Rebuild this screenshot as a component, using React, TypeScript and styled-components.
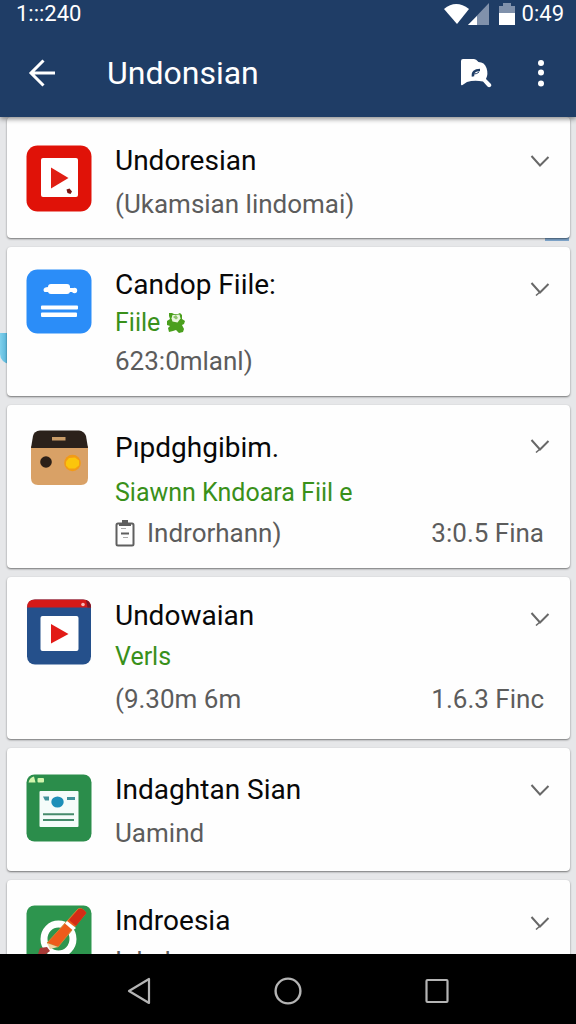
import React from 'react';
import styled, { createGlobalStyle } from 'styled-components';

const GlobalStyle = createGlobalStyle`
  *, *::before, *::after { box-sizing: border-box; }
  body { margin: 0; font-family: Roboto, "Liberation Sans", sans-serif; background: #e6e7e9; }
  h1, h2, p, ul { margin: 0; padding: 0; font-weight: 400; }
  button { border: 0; padding: 0; background: none; color: inherit; font: inherit; cursor: pointer; }
  svg { display: block; }
`;

const Screen = styled.div`
  display: flex;
  flex-direction: column;
  height: 100vh;
`;

const Header = styled.header`
  position: relative;
  z-index: 1;
  flex: none;
  color: #fff;
  background: #1f3d66;
  box-shadow: 0 2px 5px rgba(0, 0, 0, 0.45);
`;

const StatusBar = styled.div`
  display: flex;
  align-items: center;
  justify-content: space-between;
  height: 28px;
  padding: 0 12px 0 16px;
  font-size: 22px;
  line-height: 28px;
`;

const StatusIcons = styled.div`
  display: flex;
  align-items: center;
`;

const Clock = styled.span`
  margin-left: 6px;
`;

const Toolbar = styled.div`
  display: flex;
  align-items: center;
  height: 89px;
  padding: 0 13px 0 20px;
`;

const ToolButton = styled.button`
  display: flex;
  align-items: center;
  justify-content: center;
  flex: none;
  width: 44px;
  height: 44px;
`;

const Title = styled.h1`
  flex: 1;
  padding-left: 43px;
  font-size: 32px;
  line-height: 40px;
`;

const Actions = styled.div`
  display: flex;
  gap: 21px;
`;

const List = styled.ul`
  position: relative;
  flex: 1;
  min-height: 0;
  display: flex;
  flex-direction: column;
  gap: 9px;
  padding: 0 6px 0 7px;
  overflow: hidden;
  list-style: none;
  background: #e6e7e9;
`;

const Peek = styled.li<{ $edge: 'left' | 'right' }>`
  position: absolute;
  ${({ $edge }) =>
    $edge === 'left'
      ? 'left: 0; top: 216px; width: 12px; height: 31px; background: linear-gradient(90deg, #7fd0ec, #3fa3cc); border-radius: 0 0 0 10px;'
      : 'right: 7px; top: 118px; width: 24px; height: 6px; background: #7fa6cc;'}
`;

const Card = styled.li<{ $top: number; $bottom: number }>`
  position: relative;
  display: flex;
  flex: none;
  padding: ${({ $top, $bottom }) => `${$top}px 8px ${$bottom}px 19px`};
  background: #fefefe;
  border-radius: 4px;
  box-shadow: 0 1px 2px rgba(0, 0, 0, 0.5);
`;

const AppIcon = styled.div<{ $top: number }>`
  flex: none;
  width: 66px;
  height: 68px;
  margin: ${({ $top }) => $top}px 23px -10px 0;
`;

const Body = styled.div`
  flex: 1;
  min-width: 0;
  white-space: nowrap;
`;

const Name = styled.h2<{ $lead: number }>`
  color: #080808;
  font-size: 28px;
  line-height: ${({ $lead }) => $lead}px;
`;

const Line = styled.p<{ $line: number; $green?: boolean }>`
  display: flex;
  align-items: center;
  gap: ${({ $green }) => ($green ? 6 : 12)}px;
  color: ${({ $green }) => ($green ? '#39901a' : '#5c5c5c')};
  font-size: ${({ $green }) => ($green ? 25 : 26)}px;
  line-height: ${({ $line }) => $line}px;
`;

const Side = styled.div`
  display: flex;
  flex-direction: column;
  align-items: flex-end;
  justify-content: space-between;
`;

const Meta = styled.p<{ $line: number }>`
  padding-right: 18px;
  color: #5c5c5c;
  font-size: 26px;
  line-height: ${({ $line }) => $line}px;
`;

const NavBar = styled.nav`
  display: flex;
  flex: none;
  height: 70px;
  padding: 4px 65px 0;
  background: #000;
`;

const NavButton = styled.button`
  display: flex;
  flex: 1;
  align-items: center;
  justify-content: center;
`;

const Chevron = ({ tick }: { tick?: boolean }) => (
  <svg width="20" height="16" viewBox="0 0 20 16" fill="none" stroke="#686868" strokeWidth="2">
    <path d="M1.500 3 10 12.500 18.500 4" />
    {tick && <path d="m10 12-4 3.500" strokeWidth="1.500" />}
  </svg>
);

const RedPlayer = () => (
  <svg width="66" height="68" viewBox="0 0 66 68">
    <rect x="0.500" y="0.500" width="65" height="66" rx="11" fill="#e01208" />
    <rect x="15" y="13" width="37" height="39" rx="2" fill="#fff" />
    <path d="M25 22.500v21L42.500 33z" fill="#e01f14" />
    <path d="m40.500 44.500 3-1 2.500 3-1.500 2.500-3-1z" fill="#7a1410" />
  </svg>
);

const BlueDocument = () => (
  <svg width="66" height="68" viewBox="0 0 66 68">
    <rect x="0.500" y="0.500" width="65" height="64" rx="11" fill="#2b8df8" />
    <rect x="22" y="15" width="22" height="10" rx="3" fill="#fff" />
    <path d="M17.500 21q0-3 5-3v5h-4q-1-1-1-2z" fill="#fff" />
    <circle cx="48.500" cy="21.500" r="2.700" fill="#fff" />
    <path d="M43 19h4v4h-4z" fill="#fff" />
    <rect x="15" y="36.500" width="37" height="4" rx="1" fill="#fff" />
    <rect x="15" y="43.500" width="36" height="4.500" rx="1" fill="#fff" />
  </svg>
);

const TanBox = () => (
  <svg width="66" height="68" viewBox="0 0 66 68">
    <path d="M5 16h57v32q0 7-7 7H12q-7 0-7-7z" fill="#d9a166" />
    <path d="M5 18 7 6q1-5 7-5.500h39q5 0.500 7 5.500l2 12z" fill="#2b211b" />
    <rect x="26" y="7" width="13.500" height="3.500" fill="#c99c68" />
    <circle cx="20" cy="32" r="5.800" fill="#2c2018" />
    <circle cx="46.500" cy="33" r="8.300" fill="#f29b17" />
    <path d="m43 28 6-.5 4 3v5l-4 3h-6l-3-3v-4z" fill="#fbc50c" />
  </svg>
);

const BluePlayer = () => (
  <svg width="66" height="68" viewBox="0 0 66 68">
    <rect x="1" y="0.500" width="64" height="65" rx="8" fill="#25508b" />
    <path d="M1 8.500q0-8 8-8h48q8 0 8 8z" fill="#d51a18" />
    <path d="M60 1q5 2 5 7.500h-3.500z" fill="#7b1726" />
    <circle cx="57" cy="5.500" r="1.800" fill="#f6b7b4" />
    <rect x="14.500" y="17" width="38" height="35" rx="2" fill="#fff" />
    <path d="M25 25v19.500L42.500 35z" fill="#e21b17" />
  </svg>
);

const GreenForm = () => (
  <svg width="66" height="68" viewBox="0 0 66 68">
    <rect x="0.500" y="0.500" width="65" height="67" rx="8" fill="#2b8d4b" />
    <path d="M2.500 8.500q1-5 5.500-6l1.500 6z" fill="#d3f5ae" />
    <rect x="11.500" y="4" width="6.500" height="4.500" rx="1" fill="#d3f5ae" />
    <rect x="13.500" y="17" width="39" height="36" rx="1" fill="#f5fcfa" />
    <path d="M17 22.500h6v4h-4zM41 23h8v3h-8z" fill="#42929a" />
    <ellipse cx="31.500" cy="28" rx="6.200" ry="5.600" fill="#1d8fb8" />
    <path d="M17 40.300h31M17 46h31" stroke="#468b6c" strokeWidth="2" />
  </svg>
);

const GreenMarker = () => (
  <svg width="66" height="68" viewBox="0 0 66 68">
    <rect x="0.500" y="0.500" width="65" height="67" rx="8" fill="#2d954e" />
    <ellipse cx="32.500" cy="34" rx="14.500" ry="15" fill="none" stroke="#fff" strokeWidth="7" />
    <path d="m14 43 7-1 3 4-8 6-4-3z" fill="#a63a36" />
    <path d="m21 38 31-34q4-2 8 4L32 42z" fill="#ee5b1b" stroke="#c98a32" strokeWidth="1" />
    <path d="m43 15 9.500-11q4-2 8 4L50 21z" fill="#d32c16" />
    <path d="m41 16 9 7-3 2.500-8-7z" fill="#fff" />
    <path d="m21 38 11 4-8 2z" fill="#f3d3a2" />
  </svg>
);

const Bug = () => (
  <svg width="20" height="22" viewBox="0 0 20 22">
    <path
      d="M3 1h3l2 1h4l2-1 2 2v4l3 2-1 3-2 1 2 4-1 3-4 1-3-3-3 1-4 1-1-4 2-2-3-1V9l3-2-1-3z"
      fill="#4a9f1d"
    />
    <path d="m6.500 3 7-.5 1 4-3 4-5-1-1-3z" fill="#eaf5df" />
    <path d="m7 5 3-2 2 3-2 1.500z" fill="#8fc36c" />
  </svg>
);

const Clipboard = () => (
  <svg width="20" height="28" viewBox="0 0 20 28" fill="none" stroke="#5f5f5f">
    <rect x="1.500" y="4.500" width="17" height="22" rx="1.500" strokeWidth="2" />
    <path d="M4 5.500h12M7 2.500h6" strokeWidth="3" />
    <path d="M6 14.500h8" strokeWidth="2" />
    <path d="M8 18.500h5M6 9.500h5" strokeWidth="1" stroke="#aaa" />
  </svg>
);

interface Entry {
  name: string;
  icon: React.ReactNode;
  iconTop: number;
  top: number;
  bottom: number;
  lead: number;
  line: number;
  green?: string;
  badge?: React.ReactNode;
  detail: string;
  detailIcon?: React.ReactNode;
  meta?: string;
  tick?: boolean;
}

const entries: Entry[] = [
  { name: 'Undoresian', icon: <RedPlayer />, iconTop: 6, top: 22, bottom: 13, lead: 44, line: 42, detail: '(Ukamsian lindomai)' },
  { name: 'Candop Fiile:', icon: <BlueDocument />, iconTop: 3, top: 19, bottom: 16, lead: 38, line: 38, green: 'Fiile', badge: <Bug />, detail: '623:0mlanl)', tick: true },
  { name: 'Pıpdghgibim.', icon: <TanBox />, iconTop: 7, top: 18, bottom: 15, lead: 50, line: 40, green: 'Siawnn Kndoara Fiil e', detail: 'Indrorhann)', detailIcon: <Clipboard />, meta: '3:0.5 Fina', tick: true },
  { name: 'Undowaian', icon: <BluePlayer />, iconTop: 3, top: 19, bottom: 19, lead: 40, line: 42, green: 'Verls', detail: '(9.30m 6m', meta: '1.6.3 Finc', tick: true },
  { name: 'Indaghtan Sian', icon: <GreenForm />, iconTop: 6, top: 20, bottom: 17, lead: 44, line: 42, detail: 'Uamind' },
  { name: 'Indroesia', icon: <GreenMarker />, iconTop: 5, top: 20, bottom: 17, lead: 42, line: 38, detail: 'Inkol', tick: true },
];

export default function App() {
  return (
    <Screen>
      <GlobalStyle />
      <Header>
        <StatusBar>
          <span>1:::240</span>
          <StatusIcons>
            <svg width="72" height="24" viewBox="0 0 72 24">
              <path d="M0 7Q12-3 25 7L13 22z" fill="#fff" />
              <path d="M45 1v22H24z" fill="#8091ab" />
              <path d="M33 14v9h-9z" fill="#fff" />
              <path d="M55 4h4V1h8v3h4v8H55z" fill="#8091ab" />
              <path d="M55 11h16v12H55z" fill="#fff" />
            </svg>
            <Clock>0:49</Clock>
          </StatusIcons>
        </StatusBar>
        <Toolbar>
          <ToolButton aria-label="Back">
            <svg width="28" height="28" viewBox="0 0 28 28" fill="none" stroke="#fff" strokeWidth="3">
              <path d="M27 14H3M15.500 1.500 3 14l12.500 12.500" />
            </svg>
          </ToolButton>
          <Title>Undonsian</Title>
          <Actions>
            <ToolButton aria-label="Search">
              <svg width="32" height="30" viewBox="0 0 32 30">
                <path
                  d="M1 3q0-2 2-2h11q2 0 4.500 3 6 0 8 6 2 6-.5 11l5 5q1 1.500-.5 2.700-1.500 1-3-.2L23 23.500q-9-1.500-16 .5l-4.500 3Q1 28 1 26z"
                  fill="#fff"
                />
                <path d="M13 18.500q-1-6.500 7-6.500" fill="none" stroke="#1f3d66" strokeWidth="2.500" />
                <path d="M14 16q3 0 5-2" fill="none" stroke="#1f3d66" strokeWidth="1" />
              </svg>
            </ToolButton>
            <ToolButton aria-label="More options">
              <svg width="8" height="28" viewBox="0 0 8 28" fill="#fff">
                <circle cx="4" cy="4" r="3" />
                <circle cx="4" cy="13.500" r="3" />
                <circle cx="4" cy="24.500" r="3" />
              </svg>
            </ToolButton>
          </Actions>
        </Toolbar>
      </Header>
      <List>
        <Peek aria-hidden="true" $edge="left" />
        <Peek aria-hidden="true" $edge="right" />
        {entries.map((e) => (
          <Card key={e.name} $top={e.top} $bottom={e.bottom}>
            <AppIcon $top={e.iconTop}>{e.icon}</AppIcon>
            <Body>
              <Name $lead={e.lead}>{e.name}</Name>
              {e.green && (
                <Line $line={e.line} $green>
                  {e.green}
                  {e.badge}
                </Line>
              )}
              <Line $line={e.line}>
                {e.detailIcon}
                <span>{e.detail}</span>
              </Line>
            </Body>
            <Side>
              <ToolButton aria-label={`Expand ${e.name}`}>
                <Chevron tick={e.tick} />
              </ToolButton>
              {e.meta && <Meta $line={e.line}>{e.meta}</Meta>}
            </Side>
          </Card>
        ))}
      </List>
      <NavBar>
        <NavButton aria-label="Back">
          <svg width="24" height="28" viewBox="0 0 24 28" fill="none" stroke="#b4b4b4" strokeWidth="2.200" strokeLinejoin="round">
            <path d="M22 2v24L2 14z" />
          </svg>
        </NavButton>
        <NavButton aria-label="Home">
          <svg width="28" height="28" viewBox="0 0 28 28" fill="none" stroke="#b4b4b4" strokeWidth="2.400">
            <circle cx="14" cy="14" r="12.400" />
          </svg>
        </NavButton>
        <NavButton aria-label="Recent apps">
          <svg width="24" height="26" viewBox="0 0 24 26" fill="none" stroke="#b4b4b4" strokeWidth="2.200">
            <rect x="1.500" y="2" width="21" height="22" rx="1" />
          </svg>
        </NavButton>
      </NavBar>
    </Screen>
  );
}
